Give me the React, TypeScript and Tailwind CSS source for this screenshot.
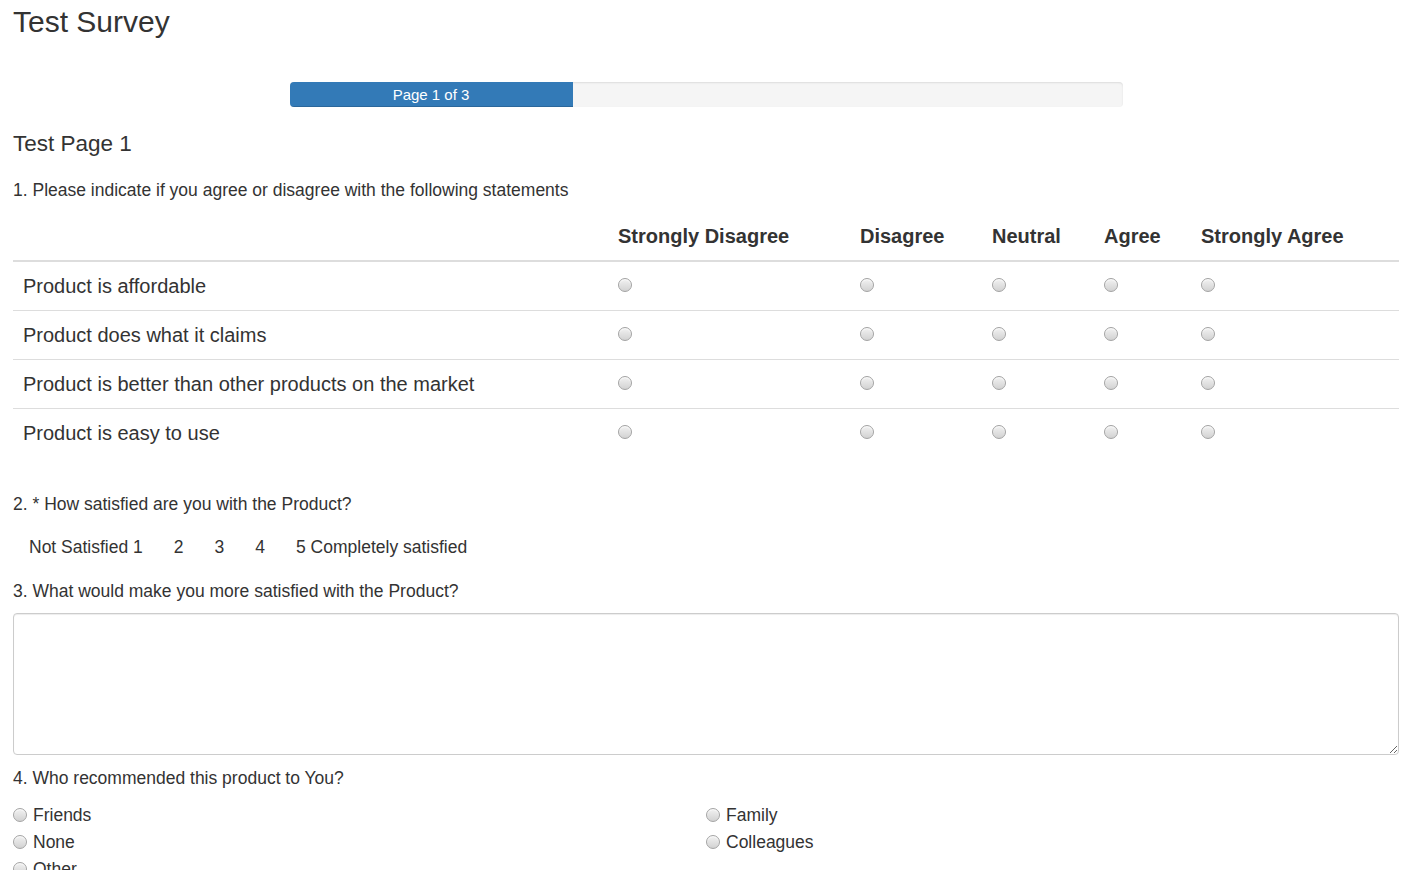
import React from "react";

const columns = [
  { label: "Strongly Disagree", width: "w-[242px]" },
  { label: "Disagree", width: "w-[132px]" },
  { label: "Neutral", width: "w-[112px]" },
  { label: "Agree", width: "w-[97px]" },
  { label: "Strongly Agree", width: "w-[208px]" },
];

const rows = [
  "Product is affordable",
  "Product does what it claims",
  "Product is better than other products on the market",
  "Product is easy to use",
];

const ratings = ["Not Satisfied 1", "2", "3", "4", "5 Completely satisfied"];

const choices = ["Friends", "Family", "None", "Colleagues", "Other"];

const Radio = () => (
  <span className="inline-block w-[14px] h-[14px] rounded-full border border-[#a4a4a4] bg-gradient-to-b from-[#f2f2f2] to-[#d2d2d2] shadow-[inset_0_1px_1px_rgba(255,255,255,0.8)] shrink-0" />
);

const App = () => {
  return (
    <div className="min-h-screen bg-white px-[13px] text-[#333] font-['Liberation_Sans',Arial,Helvetica,sans-serif]">
      <h3 className="text-[30px] leading-[33px] mt-[5px] font-normal">Test Survey</h3>

      <div className="mt-[44px] mx-auto w-[833px] h-[25px] bg-[#f5f5f5] rounded-[4px] shadow-[inset_0_1px_2px_rgba(0,0,0,0.1)] overflow-hidden flex">
        <div className="w-[283px] h-full bg-[#337ab7] text-white text-[15px] leading-[25px] text-center shadow-[inset_0_-1px_0_rgba(0,0,0,0.15)]">
          Page 1 of 3
        </div>
      </div>

      <h4 className="mt-[25px] text-[22.5px] leading-[24.75px] font-normal">Test Page 1</h4>

      <h5 className="mt-[21px] text-[17.5px] leading-[25px] font-normal">
        1. Please indicate if you agree or disagree with the following statements
      </h5>

      <table className="mt-[9px] w-[1386px] border-collapse table-fixed">
        <thead>
          <tr className="border-b-2 border-[#ddd]">
            <th className="w-[595px] p-[10px]" />
            {columns.map((c) => (
              <th
                key={c.label}
                className={`${c.width} p-[10px] text-left text-[20px] leading-[28px] font-bold whitespace-nowrap`}
              >
                {c.label}
              </th>
            ))}
          </tr>
        </thead>
        <tbody>
          {rows.map((r, i) => (
            <tr key={r} className={i > 0 ? "border-t border-[#ddd]" : ""}>
              <td className="p-[10px] text-[20px] leading-[28px]">{r}</td>
              {columns.map((c) => (
                <td key={c.label} className="p-[10px]">
                  <div className="h-[28px] flex items-center">
                    <span className="mb-[2px] flex">
                      <Radio />
                    </span>
                  </div>
                </td>
              ))}
            </tr>
          ))}
        </tbody>
      </table>

      <h5 className="mt-[35px] text-[17.5px] leading-[25px] font-normal">
        2. * How satisfied are you with the Product?
      </h5>

      <div className="mt-[9.5px] flex">
        {ratings.map((r) => (
          <span
            key={r}
            className="px-[15px] py-[7.5px] border border-transparent -mr-px text-[17.5px] leading-[25px]"
          >
            {r}
          </span>
        ))}
      </div>

      <h5 className="mt-[10.5px] text-[17.5px] leading-[25px] font-normal">
        3. What would make you more satisfied with the Product?
      </h5>

      <textarea className="block mt-[9.5px] w-full h-[142px] border border-[#ccc] rounded-[4px] shadow-[inset_0_1px_1px_rgba(0,0,0,0.075)] outline-none" />

      <h5 className="mt-[10.5px] text-[17.5px] leading-[25px] font-normal">
        4. Who recommended this product to You?
      </h5>

      <div className="mt-[11px] grid grid-cols-2 pb-4">
        {choices.map((c) => (
          <label key={c} className="flex items-center gap-[6px] h-[27px] text-[17.5px]">
            <Radio />
            <span>{c}</span>
          </label>
        ))}
      </div>
    </div>
  );
};

export default App;
